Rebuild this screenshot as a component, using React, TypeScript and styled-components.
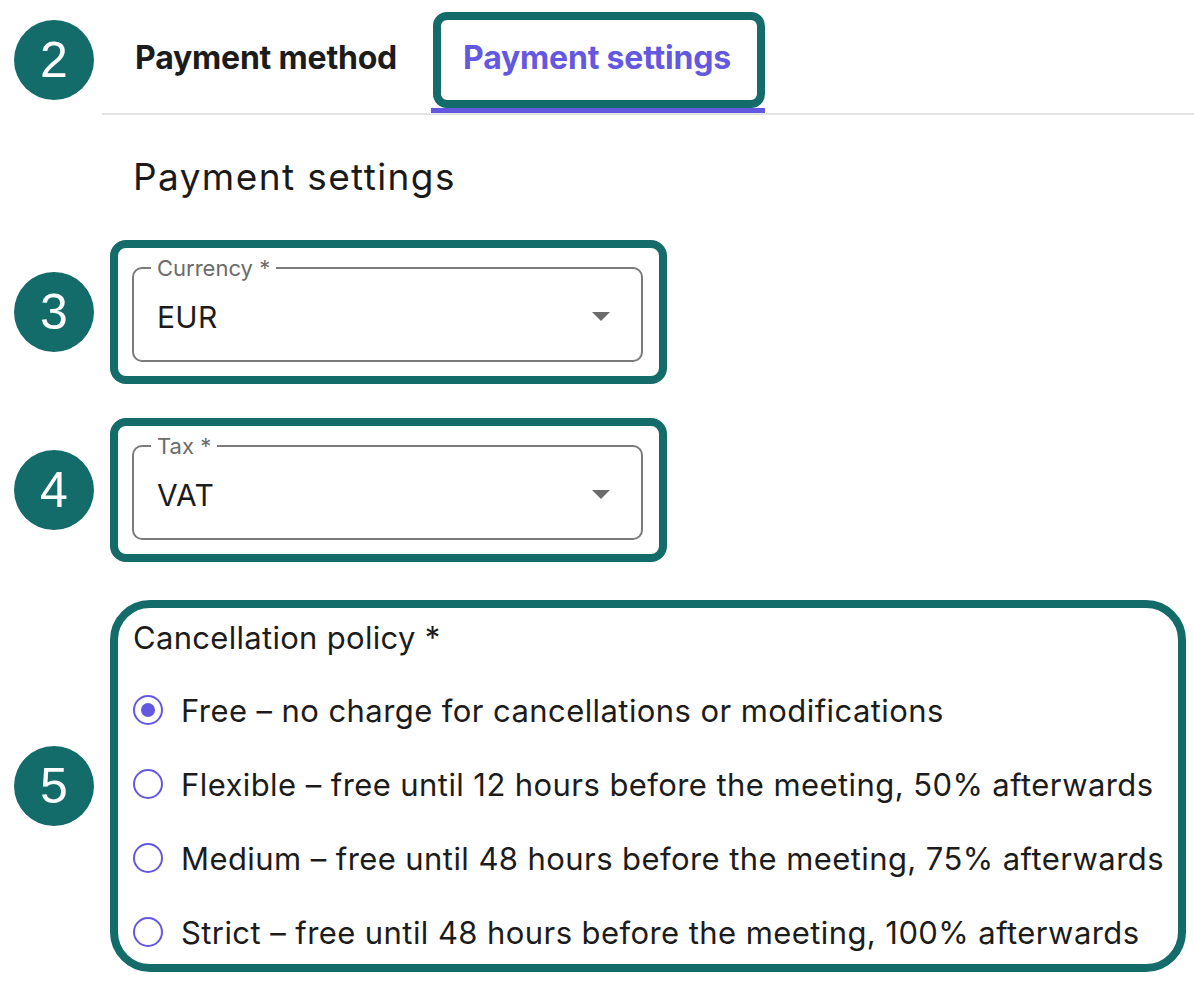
import React from "react";
import styled, { createGlobalStyle } from "styled-components";

const TEAL = "#136c69";
const PURPLE = "#6558e0";

const Global = createGlobalStyle`
  html, body { margin: 0; padding: 0; background: #fff; }
  body { font-family: Inter, "Noto Sans", sans-serif; color: #1c1c1c; }
  * { box-sizing: border-box; }
`;

const Page = styled.div`
  width: 1194px;
  height: 992px;
  padding-left: 14px;
  overflow: hidden;
  display: flex;
  flex-direction: column;
`;

const Row = styled.div<{ $mt?: number; $align?: string }>`
  display: flex;
  align-items: ${(p) => p.$align || "center"};
  margin-top: ${(p) => p.$mt || 0}px;
`;

const Badge = styled.div<{ $mt?: number }>`
  flex: none;
  width: 80px;
  height: 80px;
  border-radius: 50%;
  background: ${TEAL};
  color: #fff;
  font-family: "Liberation Sans", Arial, sans-serif;
  font-size: 50px;
  line-height: 80px;
  text-align: center;
  margin-top: ${(p) => p.$mt || 0}px;
`;

const TabBar = styled.div`
  flex: 1;
  margin-left: 8px;
  display: flex;
  align-items: flex-end;
  border-bottom: 2px solid #e3e3e3;
`;

const TabLabel = styled.div`
  font-size: 32px;
  font-weight: 700;
  letter-spacing: -0.2px;
  color: #1c1c1c;
  padding: 0 34px 10px 33px;
  height: 101px;
  display: flex;
  align-items: center;
`;

const ActiveTab = styled.div`
  display: flex;
  flex-direction: column;
  align-items: stretch;
  margin-top: 12px;
`;

const Highlight = styled.div<{ $radius: number }>`
  border: 8px solid ${TEAL};
  border-radius: ${(p) => p.$radius}px;
  background: #fff;
`;

const ActiveTabBox = styled(Highlight)`
  margin-left: 2px;
  height: 96px;
  padding: 0 26px 6px 22px;
  display: flex;
  align-items: center;
  font-size: 32px;
  font-weight: 700;
  letter-spacing: -0.2px;
  color: ${PURPLE};
`;

const Indicator = styled.div`
  height: 5px;
  background: ${PURPLE};
`;

const Heading = styled.h2`
  margin: 40px 0 0 119px;
  font-size: 37px;
  line-height: 44px;
  font-weight: 400;
  color: #1a1a1a;
  letter-spacing: 1.4px;
`;

const FieldBox = styled(Highlight)`
  margin-left: 16px;
  width: 557px;
  padding: 9px 16px 14px 14px;
`;

const Field = styled.fieldset`
  margin: 0;
  padding: 0;
  border: 2px solid #7b7b7b;
  border-radius: 10px;
  min-width: 0;
`;

const Legend = styled.legend`
  margin-left: 17px;
  padding: 0 6px;
  font-size: 22px;
  line-height: 22px;
  color: #6b6b6b;
`;

const SelectRow = styled.div`
  height: 81px;
  padding: 0 31px 6px 23px;
  display: flex;
  align-items: center;
  justify-content: space-between;
  font-size: 30px;
  letter-spacing: 0.3px;
  color: #1c1c1c;
`;

const Caret = styled.span`
  width: 0;
  height: 0;
  border-left: 9px solid transparent;
  border-right: 9px solid transparent;
  border-top: 9px solid #6b6b6b;
`;

const PolicyBox = styled(Highlight)`
  margin-left: 16px;
  width: 1076px;
  padding: 12px 0 8px 15px;
`;

const PolicyLabel = styled.div`
  font-size: 31px;
  line-height: 36px;
  letter-spacing: 0.3px;
  color: #1c1c1c;
`;

const RadioList = styled.div`
  margin-top: 30px;
  display: flex;
  flex-direction: column;
  gap: 26px;
`;

const RadioRow = styled.label`
  height: 48px;
  display: flex;
  align-items: center;
  gap: 18px;
  font-size: 31px;
  letter-spacing: 0.42px;
  color: #1c1c1c;
`;

const RadioCircle = styled.span<{ $checked?: boolean }>`
  flex: none;
  width: 30px;
  height: 30px;
  border-radius: 50%;
  border: 2px solid ${PURPLE};
  display: flex;
  align-items: center;
  justify-content: center;
  &::after {
    content: "";
    width: 14px;
    height: 14px;
    border-radius: 50%;
    background: ${PURPLE};
    display: ${(p) => (p.$checked ? "block" : "none")};
  }
`;

const options = [
  "Free – no charge for cancellations or modifications",
  "Flexible – free until 12 hours before the meeting, 50% afterwards",
  "Medium – free until 48 hours before the meeting, 75% afterwards",
  "Strict – free until 48 hours before the meeting, 100% afterwards",
];

function Select({ label, value }: { label: string; value: string }) {
  return (
    <Field>
      <Legend>{label}</Legend>
      <SelectRow>
        <span>{value}</span>
        <Caret />
      </SelectRow>
    </Field>
  );
}

export default function App() {
  return (
    <>
      <Global />
      <Page>
        <Row $align="flex-start">
          <Badge $mt={20}>2</Badge>
          <TabBar>
            <TabLabel>Payment method</TabLabel>
            <ActiveTab>
              <ActiveTabBox $radius={14}>Payment settings</ActiveTabBox>
              <Indicator />
            </ActiveTab>
          </TabBar>
        </Row>
        <Heading>Payment settings</Heading>
        <Row $mt={41}>
          <Badge>3</Badge>
          <FieldBox $radius={16}>
            <Select label="Currency *" value="EUR" />
          </FieldBox>
        </Row>
        <Row $mt={34}>
          <Badge>4</Badge>
          <FieldBox $radius={16}>
            <Select label="Tax *" value="VAT" />
          </FieldBox>
        </Row>
        <Row $mt={38}>
          <Badge>5</Badge>
          <PolicyBox $radius={40}>
            <PolicyLabel>Cancellation policy *</PolicyLabel>
            <RadioList>
              {options.map((o, i) => (
                <RadioRow key={o}>
                  <RadioCircle $checked={i === 0} />
                  <span>{o}</span>
                </RadioRow>
              ))}
            </RadioList>
          </PolicyBox>
        </Row>
      </Page>
    </>
  );
}
